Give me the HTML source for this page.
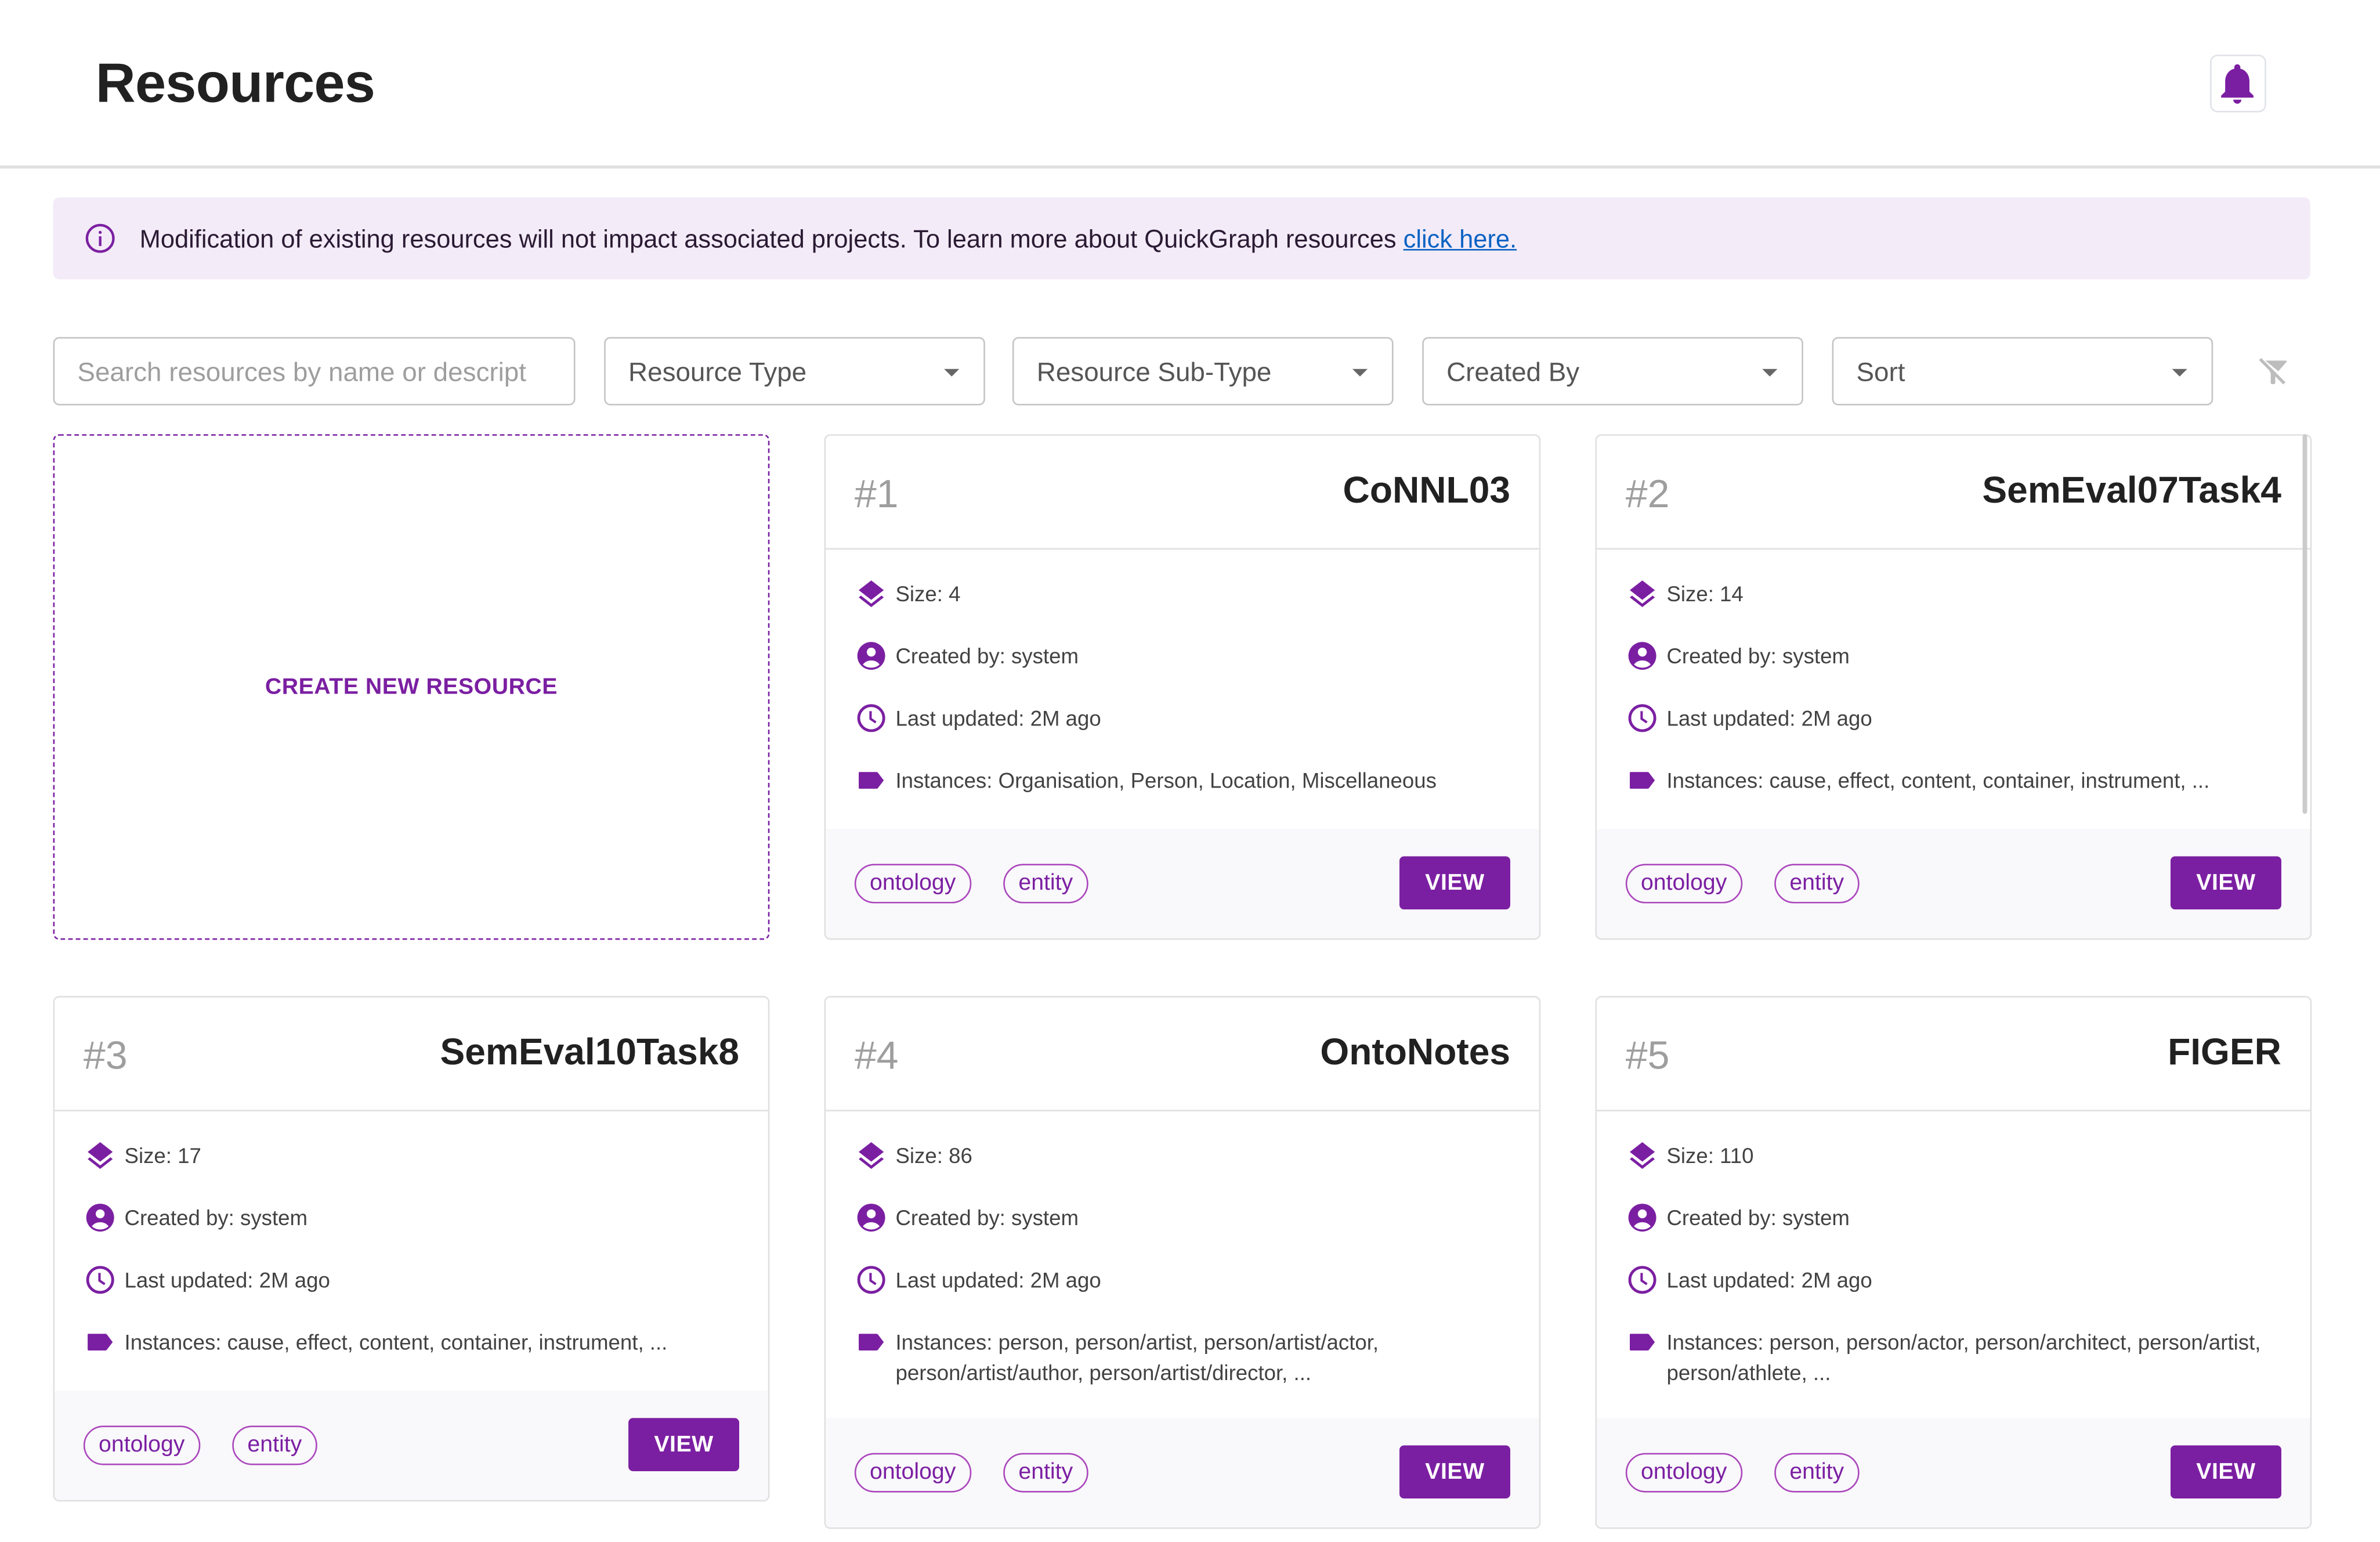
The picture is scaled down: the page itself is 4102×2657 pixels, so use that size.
<!DOCTYPE html>
<html><head><meta charset="utf-8">
<style>
html,body{margin:0;padding:0;background:#fff;overflow:hidden}
body{width:4102px;height:2657px;position:relative}
#w{position:absolute;left:0;top:0;width:1568px;height:1016px;transform:scale(2.61607);transform-origin:0 0;font-family:"Liberation Sans",sans-serif;color:#424242}
.a{position:absolute}
h1{position:absolute;left:63px;top:34px;margin:0;font-size:36.5px;font-weight:bold;color:#212121;letter-spacing:-0.3px}
.bell{left:1456px;top:36px;width:37px;height:38px;border:1.5px solid #e0e3e8;border-radius:5px;box-sizing:border-box}
.hr{left:0;top:109px;width:1568px;height:1.5px;background:#e0e0e0}
.alert{left:35px;top:130px;width:1487px;height:54px;background:#f3ebf7;border-radius:4px}
.alert span{position:absolute;left:57px;top:18px;font-size:16.6px;color:#2a1a33;white-space:nowrap}
.alert a{color:#0b63c4;text-decoration:underline}
.f{top:222px;height:45px;border:1.5px solid #c4c4c4;border-radius:4px;box-sizing:border-box;font-size:17.5px;color:#555}
.f span{position:absolute;left:15px;top:12px;white-space:nowrap}
.f i{position:absolute;right:16px;top:20px;width:0;height:0;border-left:5px solid transparent;border-right:5px solid transparent;border-top:5px solid #666}
.create{left:35px;top:286px;width:472px;height:333px;border:1.5px dashed #7b1fa2;border-radius:4px;box-sizing:border-box;color:#7b1fa2;font-size:15px;font-weight:bold;text-align:center;line-height:332px;letter-spacing:0.2px}
.card{width:472px;border:1.5px solid #e0e0e0;border-radius:4px;box-sizing:border-box;overflow:hidden;background:#fff}
.hd{height:75px;border-bottom:1.5px solid #e0e0e0;position:relative;box-sizing:border-box}
.num{position:absolute;left:19px;top:23px;font-size:26px;color:#9e9e9e;font-weight:300}
.ttl{position:absolute;right:19px;top:23px;font-size:24.5px;font-weight:bold;color:#212121}
.bd{position:relative;padding:8px 20px 0 20px;box-sizing:border-box}
.row{position:relative;padding:11px 0 0 26px;min-height:41px;box-sizing:border-box;font-size:14px;line-height:20px;color:#424242}
.row svg{position:absolute;left:-1px;top:10px;width:22px;height:22px}
.ft{background:#f9f8fb;height:73px;position:relative}
.chip{position:absolute;top:23px;height:26px;border:1.5px solid #ab47bc;border-radius:13px;box-sizing:border-box;color:#7b1fa2;font-size:15px;line-height:23px;padding:0 9px}
.view{position:absolute;right:19px;top:18px;width:73px;height:35px;background:#7b1fa2;border-radius:3px;color:#fff;font-size:15px;font-weight:bold;text-align:center;line-height:35px;letter-spacing:0.2px}
</style></head><body><div id="w">
<h1>Resources</h1>
<div class="a bell"><svg width="32" height="32" viewBox="0 0 24 24" style="position:absolute;left:1px;top:2px"><path fill="#7b1fa2" d="M12 22c1.1 0 2-.9 2-2h-4c0 1.1.9 2 2 2zm6-6v-5c0-3.07-1.64-5.64-4.5-6.32V4c0-.83-.67-1.5-1.5-1.5s-1.5.67-1.5 1.5v.68C7.630 5.36 6 7.92 6 11v5l-2 2v1h16v-1l-2-2z"/></svg></div>
<div class="a hr"></div>
<div class="a alert"><svg class="a" style="left:20px;top:16px" width="22" height="22" viewBox="0 0 24 24"><circle cx="12" cy="12" r="9.5" fill="none" stroke="#7b1fa2" stroke-width="1.8"/><rect x="11.1" y="10.5" width="1.8" height="7" fill="#7b1fa2"/><circle cx="12" cy="7.7" r="1.1" fill="#7b1fa2"/></svg><span>Modification of existing resources will not impact associated projects. To learn more about QuickGraph resources <a>click here.</a></span></div>
<div class="a f" style="left:35px;width:344px"><span style="color:#9e9e9e">Search resources by name or descript</span></div>
<div class="a f" style="left:398px;width:251px"><span>Resource Type</span><i></i></div>
<div class="a f" style="left:667px;width:251px"><span>Resource Sub-Type</span><i></i></div>
<div class="a f" style="left:937px;width:251px"><span>Created By</span><i></i></div>
<div class="a f" style="left:1207px;width:251px"><span>Sort</span><i></i></div>
<svg class="a" style="left:1486px;top:233px" width="24" height="24" viewBox="0 0 24 24"><path fill="#bdbdbd" d="M6.5 4.5h13.5c.5 0 .7.5.4.9L15 11.5 6.5 4.5zM8.5 9.5l4.5 4.3V19c0 .6-.4 1-1 1h-1c-.6 0-1-.4-1-1v-6z"/><path d="M3 3.5l16 16" stroke="#bdbdbd" stroke-width="2"/></svg>
<div class="a create">CREATE NEW RESOURCE</div>

<svg width="0" height="0" style="position:absolute"><defs>
<g id="i1"><path fill="#7b1fa2" d="M12 2.5 3 9.5l9 7 9-7z"/><path fill="#7b1fa2" d="M12 19.2 4.6 13.4 3 14.7 12 21.7l9-7-1.6-1.3z"/></g>
<g id="i2"><circle cx="12" cy="12" r="10" fill="#7b1fa2"/><circle cx="12" cy="9.3" r="3.2" fill="#fff"/><path fill="#fff" d="M6 18.2c1.4-1.9 3.6-2.9 6-2.9s4.6 1 6 2.9c-1.6 1.5-3.7 2.300-6 2.3s-4.4-.8-6-2.3z"/></g>
<g id="i3"><circle cx="12" cy="12" r="9" fill="none" stroke="#7b1fa2" stroke-width="2"/><path d="M11.5 7v5.5l3.8 2.6" fill="none" stroke="#7b1fa2" stroke-width="1.7"/></g>
<g id="i4"><path fill="#7b1fa2" d="M3.6 6h12.2c.4 0 .8.2 1 .5L21 12l-4.2 5.5c-.2.3-.6.5-1 .5H3.6c-.3 0-.6-.3-.6-.6V6.6c0-.3.3-.6.6-.6z"/></g>
</defs></svg>

<div class="a card" style="left:543px;top:286px;height:333px">
<div class="hd"><span class="num">#1</span><span class="ttl">CoNNL03</span></div>
<div class="bd" style="height:184px">
<div class="row"><svg viewBox="0 0 24 24"><use href="#i1"/></svg>Size: 4</div>
<div class="row"><svg viewBox="0 0 24 24"><use href="#i2"/></svg>Created by: system</div>
<div class="row"><svg viewBox="0 0 24 24"><use href="#i3"/></svg>Last updated: 2M ago</div>
<div class="row"><svg viewBox="0 0 24 24"><use href="#i4"/></svg>Instances: Organisation, Person, Location, Miscellaneous</div>
</div>
<div class="ft"><span class="chip" style="left:19px">ontology</span><span class="chip" style="left:117px">entity</span><span class="view">VIEW</span></div>
</div>
<div class="a card" style="left:1051px;top:286px;height:333px">
<div class="hd"><span class="num">#2</span><span class="ttl">SemEval07Task4</span></div>
<div class="bd" style="height:184px">
<div class="row"><svg viewBox="0 0 24 24"><use href="#i1"/></svg>Size: 14</div>
<div class="row"><svg viewBox="0 0 24 24"><use href="#i2"/></svg>Created by: system</div>
<div class="row"><svg viewBox="0 0 24 24"><use href="#i3"/></svg>Last updated: 2M ago</div>
<div class="row"><svg viewBox="0 0 24 24"><use href="#i4"/></svg>Instances: cause, effect, content, container, instrument, ...</div>
</div>
<div class="ft"><span class="chip" style="left:19px">ontology</span><span class="chip" style="left:117px">entity</span><span class="view">VIEW</span></div>
</div>
<div class="a" style="left:1517px;top:286px;width:3px;height:250px;background:#cbcbcb;border-radius:2px"></div>
<div class="a card" style="left:35px;top:656px;height:333px">
<div class="hd"><span class="num">#3</span><span class="ttl">SemEval10Task8</span></div>
<div class="bd" style="height:184px">
<div class="row"><svg viewBox="0 0 24 24"><use href="#i1"/></svg>Size: 17</div>
<div class="row"><svg viewBox="0 0 24 24"><use href="#i2"/></svg>Created by: system</div>
<div class="row"><svg viewBox="0 0 24 24"><use href="#i3"/></svg>Last updated: 2M ago</div>
<div class="row"><svg viewBox="0 0 24 24"><use href="#i4"/></svg>Instances: cause, effect, content, container, instrument, ...</div>
</div>
<div class="ft"><span class="chip" style="left:19px">ontology</span><span class="chip" style="left:117px">entity</span><span class="view">VIEW</span></div>
</div>
<div class="a card" style="left:543px;top:656px;height:351px">
<div class="hd"><span class="num">#4</span><span class="ttl">OntoNotes</span></div>
<div class="bd" style="height:202px">
<div class="row"><svg viewBox="0 0 24 24"><use href="#i1"/></svg>Size: 86</div>
<div class="row"><svg viewBox="0 0 24 24"><use href="#i2"/></svg>Created by: system</div>
<div class="row"><svg viewBox="0 0 24 24"><use href="#i3"/></svg>Last updated: 2M ago</div>
<div class="row"><svg viewBox="0 0 24 24"><use href="#i4"/></svg>Instances: person, person/artist, person/artist/actor,<br>person/artist/author, person/artist/director, ...</div>
</div>
<div class="ft"><span class="chip" style="left:19px">ontology</span><span class="chip" style="left:117px">entity</span><span class="view">VIEW</span></div>
</div>
<div class="a card" style="left:1051px;top:656px;height:351px">
<div class="hd"><span class="num">#5</span><span class="ttl">FIGER</span></div>
<div class="bd" style="height:202px">
<div class="row"><svg viewBox="0 0 24 24"><use href="#i1"/></svg>Size: 110</div>
<div class="row"><svg viewBox="0 0 24 24"><use href="#i2"/></svg>Created by: system</div>
<div class="row"><svg viewBox="0 0 24 24"><use href="#i3"/></svg>Last updated: 2M ago</div>
<div class="row"><svg viewBox="0 0 24 24"><use href="#i4"/></svg>Instances: person, person/actor, person/architect, person/artist,<br>person/athlete, ...</div>
</div>
<div class="ft"><span class="chip" style="left:19px">ontology</span><span class="chip" style="left:117px">entity</span><span class="view">VIEW</span></div>
</div>
</div></body></html>
